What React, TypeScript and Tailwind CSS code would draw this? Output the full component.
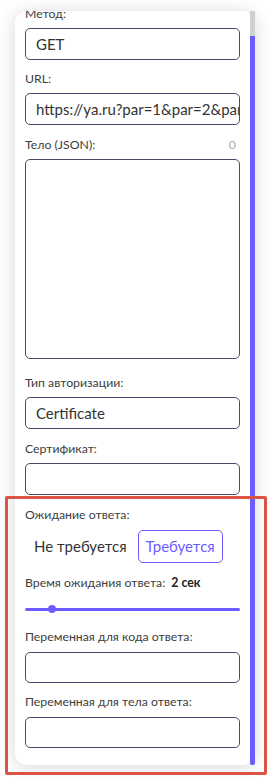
import { useState } from "react";

const font = { fontFamily: "Lato, 'Noto Sans', sans-serif" };

const Label = ({ text, className = "" }: { text: string; className?: string }) => (
    <div className={"text-[12.3px] leading-[16px] text-[#3d3d3d] whitespace-nowrap " + className}>{text}</div>
);

const Field = ({ value, h = "h-[32px]" }: { value?: string; h?: string }) => (
    <div className={"w-full border border-[#4b4a6d] rounded-[5px] pl-[10px] flex items-center overflow-hidden " + h}>
        <span className="text-[15px] text-[#333] whitespace-nowrap">{value}</span>
    </div>
);

export default function App() {
    const [waitMode, setWaitMode] = useState("need")
    return (
        <div className="relative w-[279px] h-[780px] bg-white pt-[11px] pl-[15px]" style={font}>
            <div className="flex w-[240px] h-[754px] rounded-[12px] shadow-[0_2px_18px_rgba(0,0,0,0.16)]">
                <div className="flex-1 bg-white rounded-[12px] overflow-hidden px-[10px]">
                    <div className="-mt-[5px]">
                        <Label text="Метод:" className="mb-[6px]" />
                        <Field value="GET" />
                        <Label text="URL:" className="mt-[11px] mb-[6px]" />
                        <Field value="https://ya.ru?par=1&par=2&par3" />
                        <div className="flex justify-between mt-[12px] mb-[6px]">
                            <Label text="Тело (JSON):" />
                            <span className="text-[12.3px] leading-[16px] text-[#aaa] pr-[4px]">0</span>
                        </div>
                        <div className="w-full h-[200px] border border-[#4b4a6d] rounded-[5px]"></div>
                        <Label text="Тип авторизации:" className="mt-[16px] mb-[6px]" />
                        <Field value="Certificate" />
                        <Label text="Сертификат:" className="mt-[12px] mb-[6px]" />
                        <Field />
                        <Label text="Ожидание ответа:" className="mt-[12px] mb-[7px]" />
                        <div className="flex gap-[3px] pl-[1px]">
                            <button onClick={() => setWaitMode("none")}
                                className={"h-[33px] px-[7px] rounded-[5px] border text-[15px] whitespace-nowrap " + (waitMode == "none" ? "border-[#6b5cff] text-[#6b5cff]" : "border-transparent text-[#333]")}>
                                Не требуется
                            </button>
                            <button onClick={() => setWaitMode("need")}
                                className={"h-[33px] px-[7px] rounded-[5px] border text-[15px] whitespace-nowrap " + (waitMode == "need" ? "border-[#6b5cff] text-[#6b5cff]" : "border-transparent text-[#333]")}>
                                Требуется
                            </button>
                        </div>
                        <div className="flex gap-[6px] mt-[12px] text-[12.3px] leading-[16px] text-[#3d3d3d] whitespace-nowrap">
                            <span>Время ожидания ответа:</span>
                            <span className="font-bold text-[#222]">2 сек</span>
                        </div>
                        <div className="relative h-[8px] mt-[14px] flex items-center">
                            <div className="w-full h-[3px] rounded-full bg-[#6b5cff]"></div>
                            <div className="absolute left-[23px] top-0 w-[8px] h-[8px] rounded-full bg-[#6b5cff]"></div>
                        </div>
                        <Label text="Переменная для кода ответа:" className="mt-[16px] mb-[7px]" />
                        <Field h="h-[31px]" />
                        <Label text="Переменная для тела ответа:" className="mt-[11px] mb-[7px]" />
                        <Field h="h-[31px]" />
                    </div>
                </div>
                <div className="w-[5px] flex flex-col">
                    <div className="h-[25px] bg-[#d0d0d0]"></div>
                    <div className="flex-1 bg-[#6b5cff] rounded-b-[2px]"></div>
                </div>
            </div>
            {/* annotation frame */}
            <div className="absolute left-[5px] top-[496px] w-[262px] h-[279px] border-[3px] border-[#dc5345] rounded-[2px] pointer-events-none"></div>
        </div>
    );
}
